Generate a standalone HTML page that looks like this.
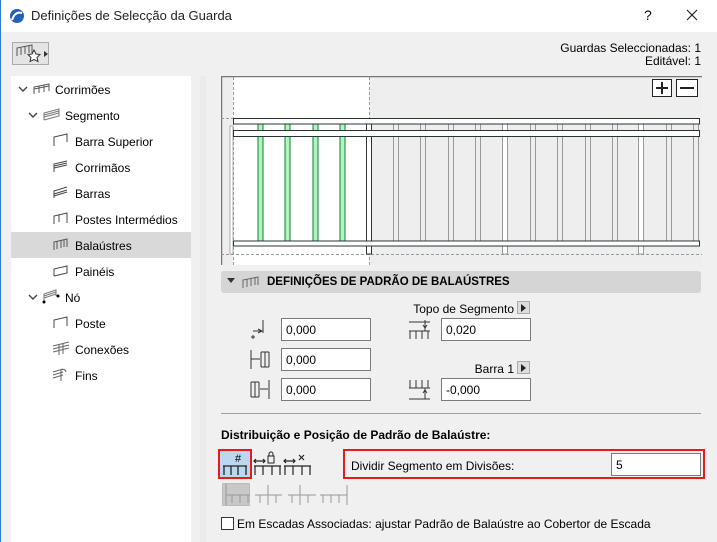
<!DOCTYPE html>
<html><head><meta charset="utf-8"><style>
*{margin:0;padding:0;box-sizing:border-box}
body{width:717px;height:542px;overflow:hidden;background:#f0f0f0;font-family:"Liberation Sans",sans-serif;font-size:12px;color:#000;position:relative}
.a{position:absolute}
.t{white-space:nowrap}
.inp{position:absolute;background:#fff;border:1px solid #7a7a7a;padding:4px 0 0 4px;font-size:12px;height:23px}
.tree div{position:absolute;white-space:nowrap}
</style></head><body>
<div class="a" style="left:0;top:0;width:717px;height:32px;background:#fff"></div>
<div class="a" style="left:0;top:0;width:1px;height:542px;background:#2b7bd6"></div>
<svg class="a" style="left:9px;top:8px" width="16" height="16"><circle cx="8" cy="8" r="7" fill="#2460b8"/><path d="M3 12 Q6 3 13 5" stroke="#fff" stroke-width="2" fill="none"/></svg>
<div class="a t" style="left:31px;top:8px;font-size:13px;color:#222">Definições de Selecção da Guarda</div>
<div class="a t" style="left:644px;top:7px;font-size:14px">?</div>
<svg class="a" style="left:686px;top:9px" width="12" height="12"><path d="M1 1L11 11M11 1L1 11" stroke="#222" stroke-width="1.2"/></svg>

<div class="a" style="left:12px;top:42px;width:37px;height:23px;border:1px solid #aaa;background:#e4e4e4"></div>
<svg class="a" style="left:14px;top:44px" width="36" height="20"><path d="M3 12V4L18 1V9M7 11V4M11 10V3M15 9V2" stroke="#555" fill="none"/><path d="M20 6l2 4 4 .5-3 3 1 4-4-2-4 2 1-4-3-3 4-.5z" fill="#fff" stroke="#333"/><path d="M30 7l4 3-4 3z" fill="#333"/></svg>

<div class="a t" style="right:16px;top:42px;text-align:right;line-height:13px">Guardas Seleccionadas: 1<br>Editável: 1</div>

<div class="a" style="left:11px;top:76px;width:180px;height:466px;background:#fff"></div>
<div class="a" style="left:200px;top:76px;width:6px;height:466px;background:#ebebeb"></div>
<div class="a" style="left:11px;top:232px;width:180px;height:26px;background:#d9d9d9"></div>
<div class="tree">
<svg class="a" style="left:18px;top:86px" width="10" height="7"><path d="M1 1L5 5L9 1" stroke="#444" stroke-width="1.4" fill="none"/></svg>
<svg class="a" style="left:33px;top:83px" width="18" height="12"><path d="M1 11V4L16 1V8M1 6L16 3M6 10V3M11 9V2" stroke="#555" fill="none"/></svg>
<div style="left:55px;top:83px">Corrimões</div>
<svg class="a" style="left:28px;top:112px" width="10" height="7"><path d="M1 1L5 5L9 1" stroke="#444" stroke-width="1.4" fill="none"/></svg>
<svg class="a" style="left:43px;top:108px" width="18" height="13"><path d="M1 12V5L16 1V8L1 12M1 7L16 3M1 9L16 5" stroke="#777" fill="none"/></svg>
<div style="left:65px;top:109px">Segmento</div>
<svg class="a" style="left:53px;top:133px" width="16" height="14"><path d="M1 13V4L14 1V9" stroke="#444" fill="none"/></svg>
<div style="left:75px;top:135px">Barra Superior</div>
<svg class="a" style="left:53px;top:159px" width="16" height="14"><path d="M1 13V5L14 2M1 7L14 4M1 9L14 6" stroke="#444" fill="none"/></svg>
<div style="left:75px;top:161px">Corrimãos</div>
<svg class="a" style="left:53px;top:185px" width="16" height="14"><path d="M1 13V6L14 2M1 9L14 5M1 11L14 7" stroke="#444" fill="none"/></svg>
<div style="left:75px;top:187px">Barras</div>
<svg class="a" style="left:53px;top:211px" width="16" height="14"><path d="M1 13V5L14 2V12M6 4V11" stroke="#444" fill="none"/></svg>
<div style="left:75px;top:213px">Postes Intermédios</div>
<svg class="a" style="left:53px;top:237px" width="16" height="14"><path d="M1 13V5L14 2V10M4 4V12M8 3V11M11 3V10" stroke="#555" fill="none"/></svg>
<div style="left:75px;top:239px">Balaústres</div>
<svg class="a" style="left:53px;top:263px" width="16" height="14"><path d="M1 13V6L14 3V10L1 13" stroke="#444" fill="none"/></svg>
<div style="left:75px;top:265px">Painéis</div>
<svg class="a" style="left:28px;top:294px" width="10" height="7"><path d="M1 1L5 5L9 1" stroke="#444" stroke-width="1.4" fill="none"/></svg>
<svg class="a" style="left:42px;top:289px" width="18" height="15"><path d="M2 14V5L14 1V7M2 7L14 3M2 9L14 5" stroke="#777" fill="none"/><circle cx="2" cy="13" r="1.5"/><circle cx="16" cy="7" r="1.5"/></svg>
<div style="left:65px;top:291px">Nó</div>
<svg class="a" style="left:53px;top:315px" width="16" height="14"><path d="M1 13V5L14 2V11" stroke="#444" fill="none"/></svg>
<div style="left:75px;top:317px">Poste</div>
<svg class="a" style="left:51px;top:340px" width="20" height="16"><path d="M2 6L18 2M2 9L18 5M2 12L18 8M8 4V15M12 3V14" stroke="#666" fill="none"/></svg>
<div style="left:75px;top:343px">Conexões</div>
<svg class="a" style="left:51px;top:366px" width="20" height="16"><path d="M2 6L12 3M2 9L12 6M2 12L12 9M10 15V4Q14 2 15 6" stroke="#666" fill="none"/></svg>
<div style="left:75px;top:369px">Fins</div>
</div>

<svg class="a" style="left:221px;top:76px" width="482" height="190">
<rect x="0" y="0" width="481" height="189" fill="#eeeeee"/>
<rect x="12" y="1" width="136" height="188" fill="#fff"/>
<path d="M0.5 189V0.5H481" stroke="#777" fill="none" stroke-width="1.5"/>
<path d="M12.5 1V189M148.5 1V189M0 42.5H12M0 178.5H481" stroke="#999" stroke-dasharray="3,2" fill="none"/>
<rect x="9" y="50" width="3" height="128" fill="#fff" stroke="#999" stroke-width="0.8"/>
<g stroke="#999" fill="none">
<path d="M172.5 48V165M177.5 48V165M199.5 48V165M204.5 48V165M227.5 48V165M232.5 48V165M254.5 48V165M259.5 48V165M309.5 48V165M314.5 48V165M336.5 48V165M341.5 48V165M364.5 48V165M369.5 48V165M391.5 48V165M396.5 48V165M445.5 48V165M450.5 48V165M472.5 48V165M477.5 48V165"/>
<rect x="281.5" y="48" width="5" height="130" fill="#fff"/><rect x="417.5" y="48" width="5" height="130" fill="#fff"/>
</g>
<g fill="#aef5bf" stroke="#1a7a33">
<rect x="37" y="48" width="5" height="117"/><rect x="64" y="48" width="5" height="117"/><rect x="92" y="48" width="5" height="117"/><rect x="119" y="48" width="5" height="117"/>
</g>
<rect x="145.5" y="48" width="5" height="130" fill="#fff" stroke="#333"/>
<g fill="#fff" stroke="#2a3338">
<rect x="12.5" y="42.5" width="466" height="5.5"/><rect x="12.5" y="54.5" width="466" height="6"/><rect x="12.5" y="165" width="466" height="5"/>
</g>
<rect x="431.5" y="3.5" width="19" height="17" fill="#fff" stroke="#222"/><path d="M441 6V18M435 12H447" stroke="#222" stroke-width="2"/>
<rect x="455.5" y="3.5" width="21" height="17" fill="#fff" stroke="#222"/><path d="M459 12H473" stroke="#222" stroke-width="2"/>
</svg>

<div class="a" style="left:221px;top:271px;width:480px;height:22px;background:#d5d5d5;border-radius:3px"></div>
<svg class="a" style="left:227px;top:278px" width="8" height="6"><path d="M0 0H8L4 5z" fill="#333"/></svg>
<svg class="a" style="left:242px;top:275px" width="18" height="14"><path d="M1 13V5L16 2V10M5 4V12M9 3V11M13 2V10" stroke="#666" fill="none"/></svg>
<div class="a t" style="left:267px;top:276px;font-weight:bold;font-size:11.5px">DEFINIÇÕES DE PADRÃO DE BALAÚSTRES</div>

<div class="a t" style="right:203px;top:302px">Topo de Segmento</div>
<div class="a" style="left:517px;top:301px;width:13px;height:13px;background:#ddd;border:1px solid #aaa"></div><svg class="a" style="left:521px;top:304px" width="6" height="8"><path d="M0 0L5 4L0 8z" fill="#222"/></svg>
<div class="a t" style="right:203px;top:362px">Barra 1</div>
<div class="a" style="left:517px;top:361px;width:13px;height:13px;background:#ddd;border:1px solid #aaa"></div><svg class="a" style="left:521px;top:364px" width="6" height="8"><path d="M0 0L5 4L0 8z" fill="#222"/></svg>

<svg class="a" style="left:250px;top:319px" width="20" height="22"><path d="M13 1V14M3 12H12M8 10L12 12L8 14M3 16V20M1 18H5" stroke="#333" fill="none"/></svg>
<svg class="a" style="left:250px;top:349px" width="20" height="22"><path d="M1 1V20M11 3V18M19 3V18M11 3H19M11 18H19M15 3V18M1 10H10" stroke="#333" fill="none"/></svg>
<svg class="a" style="left:250px;top:379px" width="20" height="22"><path d="M1 3V18M9 3V18M1 3H9M1 18H9M5 3V18M19 1V20M10 10H18" stroke="#333" fill="none"/></svg>
<div class="inp" style="left:281px;top:318px;width:90px">0,000</div>
<div class="inp" style="left:281px;top:348px;width:90px">0,000</div>
<div class="inp" style="left:281px;top:378px;width:90px">0,000</div>
<svg class="a" style="left:408px;top:319px" width="24" height="22"><path d="M1 3H22M17 1V12M15 6L17 9L19 6M1 12H22M2 12V20M8 12V20M14 12V20M20 12V20" stroke="#333" fill="none"/></svg>
<svg class="a" style="left:408px;top:379px" width="24" height="22"><path d="M2 1V9M8 1V9M14 1V9M20 1V9M1 9H22M17 9V20M15 14L17 11L19 14M1 20H22" stroke="#333" fill="none"/></svg>
<div class="inp" style="left:441px;top:318px;width:90px">0,020</div>
<div class="inp" style="left:441px;top:378px;width:90px">-0,000</div>

<div class="a" style="left:221px;top:413px;width:480px;height:1px;background:#a0a0a0"></div>
<div class="a t" style="left:221px;top:428px;font-weight:bold">Distribuição e Posição de Padrão de Balaústre:</div>

<div class="a" style="left:218px;top:449px;width:34px;height:30px;border:2px solid #e81b1b;background:#bcd8f0"></div>
<svg class="a" style="left:220px;top:451px" width="30" height="26"><text x="15" y="11" font-size="11" font-family="Liberation Sans">#</text><path d="M3 15H27M4 15V24M11 15V24M18 15V24M26 15V24" stroke="#222" stroke-width="1.3" fill="none"/></svg>
<svg class="a" style="left:253px;top:451px" width="30" height="26"><path d="M1 10H12M3 8L1 10L3 12M10 8L12 10L10 12M1 15H28M2 15V24M10 15V24M19 15V24M27 15V24" stroke="#222" stroke-width="1.2" fill="none"/><rect x="15" y="5" width="6" height="7" fill="none" stroke="#222"/><path d="M16 5V3a2 2 0 0 1 4 0V5" stroke="#222" fill="none"/></svg>
<svg class="a" style="left:283px;top:451px" width="30" height="26"><path d="M1 10H12M3 8L1 10L3 12M10 8L12 10L10 12M1 15H28M2 15V24M10 15V24M19 15V24M27 15V24M16 4L21 9M21 4L16 9" stroke="#222" stroke-width="1.2" fill="none"/></svg>
<div class="a" style="left:222px;top:483px;width:28px;height:23px;background:#c8c8c8;border:1px solid #bbb"></div>
<svg class="a" style="left:222px;top:483px" width="130" height="25"><g stroke="#999" fill="none"><path d="M4 1V22M4 12H28M10 12V20M18 12V20M26 12V20M33 12H60M38 12V20M46 12V20M54 12V20M46 2V22M66 12H94M70 12V20M78 12V20M86 12V20M78 2V22M98 12H125M101 12V20M109 12V20M117 12V20M125 2V22"/></g></svg>

<div class="a" style="left:343px;top:449px;width:362px;height:30px;border:2px solid #e81b1b"></div>
<div class="a t" style="left:351px;top:459px">Dividir Segmento em Divisões:</div>
<div class="inp" style="left:611px;top:453px;width:90px">5</div>

<div class="a" style="left:221px;top:517px;width:13px;height:13px;background:#fff;border:1px solid #333"></div>
<div class="a t" style="left:237px;top:517px">Em Escadas Associadas: ajustar Padrão de Balaústre ao Cobertor de Escada</div>
</body></html>
